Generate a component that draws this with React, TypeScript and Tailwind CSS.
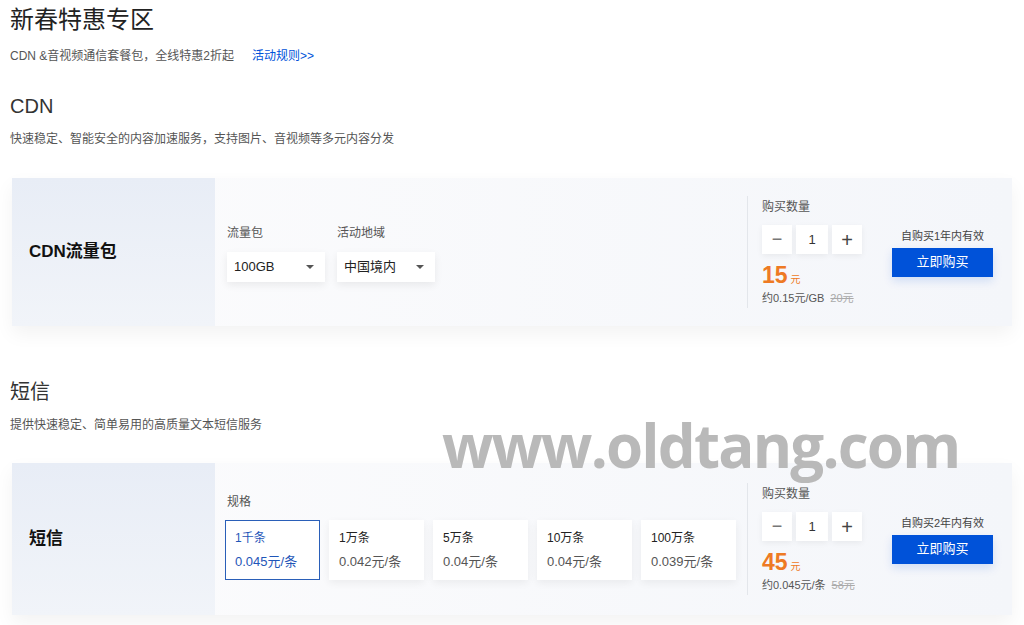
import React from 'react';

const font = "font-['Liberation_Sans','Noto_Sans_CJK_SC',sans-serif]";

function Stepper() {
    return (
        <div className="flex gap-[4px]">
            <div className="w-[30px] h-[29px] bg-white shadow-[0_2px_6px_rgba(0,0,0,0.06)] flex items-center justify-center text-[#777] text-[18px] font-light">−</div>
            <div className="w-[32px] h-[29px] bg-white shadow-[0_2px_6px_rgba(0,0,0,0.06)] flex items-center justify-center text-[#333] text-[13px]">1</div>
            <div className="w-[30px] h-[29px] bg-white shadow-[0_2px_6px_rgba(0,0,0,0.06)] flex items-center justify-center text-[#444] text-[20px] font-light">+</div>
        </div>
    );
}

interface BuyProps {
    price: string;
    unit: string;
    origin: string;
    valid: string;
}

function BuyPanel({ price, unit, origin, valid }: BuyProps) {
    return (
        <div className="ml-auto flex items-center pr-[19px]">
            <div className="border-l border-[#e3e6eb] pl-[14px] py-[2px] w-[130px]">
                <div className="text-[12px] leading-[18px] text-[#555]">购买数量</div>
                <div className="mt-[9px]">
                    <Stepper />
                </div>
                <div className="mt-[8px] flex items-baseline text-[#ee7a24]">
                    <span className="text-[23px] leading-[26px] font-bold">{price}</span>
                    <span className="text-[10px] ml-[3px]">元</span>
                </div>
                <div className="mt-[2px] text-[11px] leading-[16px] text-[#555]">
                    {unit}
                    <span className="ml-[6px] text-[#aaa] line-through">{origin}</span>
                </div>
            </div>
            <div className="ml-[15px] w-[101px] flex flex-col items-center">
                <div className="text-[11px] leading-[16px] text-[#444]">{valid}</div>
                <button className="mt-[4px] w-[101px] h-[29px] bg-[#0052d9] text-white text-[13px] shadow-[0_4px_10px_rgba(0,82,217,0.15)]">立即购买</button>
            </div>
        </div>
    );
}

function Select({ value }: { value: string }) {
    return (
        <div className="w-[98px] h-[30px] bg-white shadow-[0_3px_8px_rgba(0,0,0,0.07)] flex items-center justify-between pl-[7px] pr-[11px] text-[13px] text-[#222]">
            <span>{value}</span>
            <span className="w-0 h-0 border-l-[4px] border-r-[4px] border-t-[4px] border-l-transparent border-r-transparent border-t-[#555]"></span>
        </div>
    );
}

const specs = [
    { n: '1千条', p: '0.045元/条' },
    { n: '1万条', p: '0.042元/条' },
    { n: '5万条', p: '0.04元/条' },
    { n: '10万条', p: '0.04元/条' },
    { n: '100万条', p: '0.039元/条' },
];

export default function App() {
    return (
        <div className={`relative w-[1024px] h-[625px] overflow-hidden bg-white ${font}`}>
            <div className="px-[10px]">
                <h1 className="mt-[4px] text-[24px] leading-[32px] text-[#222]">新春特惠专区</h1>
                <p className="mt-[10px] text-[12px] leading-[20px] text-[#555]">
                    CDN &amp;音视频通信套餐包，全线特惠2折起
                    <a className="ml-[18px] text-[#0052d9]">活动规则&gt;&gt;</a>
                </p>
                <h2 className="mt-[26px] text-[20px] leading-[28px] text-[#333]">CDN</h2>
                <p className="mt-[9px] text-[12px] leading-[20px] text-[#555]">快速稳定、智能安全的内容加速服务，支持图片、音视频等多元内容分发</p>
            </div>

            <div className="mt-[29px] mx-[12px] h-[148px] flex bg-gradient-to-r from-[#fcfcfd] to-[#f4f6fa] shadow-[0_8px_18px_rgba(0,0,0,0.05)]">
                <div className="w-[203px] bg-gradient-to-b from-[#e8edf6] to-[#f1f4f9] flex items-center pl-[17px]">
                    <span className="text-[17px] font-bold text-[#111]">CDN流量包</span>
                </div>
                <div className="flex items-center pl-[12px] gap-[12px]">
                    <div>
                        <div className="text-[12px] leading-[20px] text-[#555] mb-[9px]">流量包</div>
                        <Select value="100GB" />
                    </div>
                    <div>
                        <div className="text-[12px] leading-[20px] text-[#555] mb-[9px]">活动地域</div>
                        <Select value="中国境内" />
                    </div>
                </div>
                <BuyPanel price="15" unit="约0.15元/GB" origin="20元" valid="自购买1年内有效" />
            </div>

            <div className="px-[10px]">
                <h2 className="mt-[52px] text-[20px] leading-[28px] text-[#333]">短信</h2>
                <p className="mt-[9px] text-[12px] leading-[20px] text-[#555]">提供快速稳定、简单易用的高质量文本短信服务</p>
            </div>

            <div className="mt-[28px] mx-[12px] h-[152px] flex bg-gradient-to-r from-[#fcfcfd] to-[#f4f6fa] shadow-[0_8px_18px_rgba(0,0,0,0.05)]">
                <div className="w-[203px] bg-gradient-to-b from-[#e8edf6] to-[#f1f4f9] flex items-center pl-[17px]">
                    <span className="text-[17px] font-bold text-[#111]">短信</span>
                </div>
                <div className="flex flex-col justify-center pl-[10px] pb-[6px]">
                    <div className="pl-[2px] text-[12px] leading-[20px] text-[#555] mb-[8px]">规格</div>
                    <div className="flex gap-[9px]">
                        {specs.map((s, i) => (
                            <div
                                key={s.n}
                                className={
                                    i === 0
                                        ? 'w-[95px] h-[60px] bg-white border border-[#2a5fb8] pl-[9px] pt-[8px] text-[#1f56b8]'
                                        : 'w-[95px] h-[60px] bg-white shadow-[0_3px_8px_rgba(0,0,0,0.06)] pl-[10px] pt-[9px] text-[#555]'
                                }
                            >
                                <div className={i === 0 ? 'text-[12px] leading-[18px]' : 'text-[12px] leading-[18px] text-[#222]'}>{s.n}</div>
                                <div className="mt-[6px] text-[13px] leading-[18px]">{s.p}</div>
                            </div>
                        ))}
                    </div>
                </div>
                <BuyPanel price="45" unit="约0.045元/条" origin="58元" valid="自购买2年内有效" />
            </div>

            <div className="absolute left-[442px] top-[400px] text-[60px] leading-[90px] font-bold text-[#b9b9b9] font-['Open_Sans',sans-serif] tracking-[-1.8px] pointer-events-none whitespace-nowrap">
                www.oldtang.com
            </div>
        </div>
    );
}
